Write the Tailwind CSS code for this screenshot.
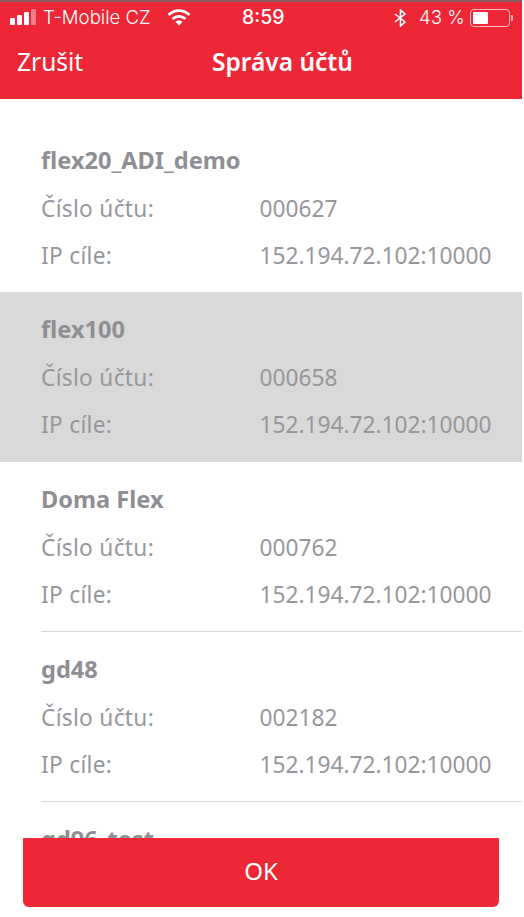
<!DOCTYPE html>
<html lang="cs">
<head>
  <meta charset="UTF-8">
  <meta name="viewport" content="width=device-width, initial-scale=1">
  <title>Správa účtů</title>
  <script src="https://cdn.jsdelivr.net/npm/@tailwindcss/browser@4"></script>
</head>
<body class="bg-white font-['Noto_Sans',sans-serif] h-[917px] w-[524px] overflow-hidden relative">
  <div class="w-[522px]">
    <!-- header -->
    <header class="bg-[#ee2737] h-[99px] border-t-2 border-[#8a5a5e] text-white">
      <div class="h-[32px] flex items-center pl-[10px] font-['Inter',sans-serif] text-[18.6px] whitespace-nowrap">
        <div class="flex items-end gap-[2px] w-[28px] h-[16px] mb-[2px] shrink-0">
          <span class="w-[5px] h-[7px] bg-white rounded-[1px]"></span>
          <span class="w-[5px] h-[10px] bg-white rounded-[1px]"></span>
          <span class="w-[5px] h-[13px] bg-white rounded-[1px]"></span>
          <span class="w-[5px] h-[16px] bg-white/40 rounded-[1px]"></span>
        </div>
        <span class="ml-[5px] font-light w-[115px] shrink-0">T-Mobile CZ</span>
        <svg class="ml-[9px] mb-[2px] shrink-0" width="24" height="17" viewBox="0 0 24 17" fill="none" stroke="white" stroke-width="2.8">
          <path d="M1.5 6 A15 15 0 0 1 22.5 6"/>
          <path d="M5.5 10 A9.5 9.5 0 0 1 18.5 10"/>
          <path d="M12 16.5 L8.4 12.8 A5 5 0 0 1 15.6 12.8 Z" fill="white" stroke="none"/>
        </svg>
        <span class="ml-[51px] font-medium text-[19.5px] w-[46px] shrink-0">8:59</span>
        <svg class="ml-[106px] shrink-0" width="13" height="18" viewBox="0 0 13 18" fill="none" stroke="white" stroke-width="1.6">
          <path d="M1 5 L11 13 L6.5 17 L6.5 1 L11 5 L1 13"/>
        </svg>
        <span class="ml-[12px] font-light w-[48px] shrink-0">43 %</span>
        <div class="ml-[3px] w-[40px] h-[18px] border border-white/70 rounded-[4px] p-[2px] shrink-0">
          <div class="w-[15px] h-full bg-white rounded-[1px]"></div>
        </div>
        <span class="ml-[1px] w-[2px] h-[6px] bg-white/60 rounded-r-[1px] shrink-0"></span>
      </div>
      <div class="relative h-[56px] flex items-center justify-center">
        <span class="absolute left-[17px] text-[24.5px]">Zrušit</span>
        <span class="ml-[43px] text-[24.5px] font-semibold">Správa účtů</span>
      </div>
    </header>

    <!-- accounts -->
    <main class="pt-[23px]">
      <section class="pl-[41px] h-[170px] flex flex-col justify-center">
        <h2 class="text-[#8e8e93] font-bold text-[23.6px] h-[47px] leading-[47px]">flex20_ADI_demo</h2>
        <div class="flex text-[#97979b] text-[22.7px] h-[47px] leading-[49px]"><span class="w-[218.5px] tracking-[0.3px]">Číslo účtu:</span><span>000627</span></div>
        <div class="flex text-[#97979b] text-[22.7px] h-[47px] leading-[49px]"><span class="w-[218.5px] tracking-[0.3px]">IP cíle:</span><span>152.194.72.102:10000</span></div>
      </section>
      <section class="pl-[41px] pb-[2px] h-[170px] flex flex-col justify-center bg-[#d9d9d9]">
        <h2 class="text-[#8e8e93] font-bold text-[23.6px] h-[47px] leading-[47px]">flex100</h2>
        <div class="flex text-[#97979b] text-[22.7px] h-[47px] leading-[49px]"><span class="w-[218.5px] tracking-[0.3px]">Číslo účtu:</span><span>000658</span></div>
        <div class="flex text-[#97979b] text-[22.7px] h-[47px] leading-[49px]"><span class="w-[218.5px] tracking-[0.3px]">IP cíle:</span><span>152.194.72.102:10000</span></div>
      </section>
      <div class="ml-[41px]">
        <section class="h-[170px] flex flex-col justify-center border-b border-[#d9d9d9]">
          <h2 class="text-[#8e8e93] font-bold text-[23.6px] h-[47px] leading-[47px]">Doma Flex</h2>
          <div class="flex text-[#97979b] text-[22.7px] h-[47px] leading-[49px]"><span class="w-[218.5px] tracking-[0.3px]">Číslo účtu:</span><span>000762</span></div>
          <div class="flex text-[#97979b] text-[22.7px] h-[47px] leading-[49px]"><span class="w-[218.5px] tracking-[0.3px]">IP cíle:</span><span>152.194.72.102:10000</span></div>
        </section>
        <section class="h-[170px] flex flex-col justify-center border-b border-[#d9d9d9]">
          <h2 class="text-[#8e8e93] font-bold text-[23.6px] h-[47px] leading-[47px]">gd48</h2>
          <div class="flex text-[#97979b] text-[22.7px] h-[47px] leading-[49px]"><span class="w-[218.5px] tracking-[0.3px]">Číslo účtu:</span><span>002182</span></div>
          <div class="flex text-[#97979b] text-[22.7px] h-[47px] leading-[49px]"><span class="w-[218.5px] tracking-[0.3px]">IP cíle:</span><span>152.194.72.102:10000</span></div>
        </section>
        <section class="h-[60px] pt-[14px]">
          <h2 class="text-[#8e8e93] font-bold text-[23.6px] h-[47px] leading-[47px]">gd96_test</h2>
        </section>
      </div>
    </main>
  </div>

  <!-- floats over the list -->
  <button class="absolute left-[23px] top-[838px] w-[476px] h-[69px] pb-[4px] bg-[#ee2737] text-white text-[24px] rounded-b-[6px] rounded-t-[1px]">OK</button>
</body>
</html>
